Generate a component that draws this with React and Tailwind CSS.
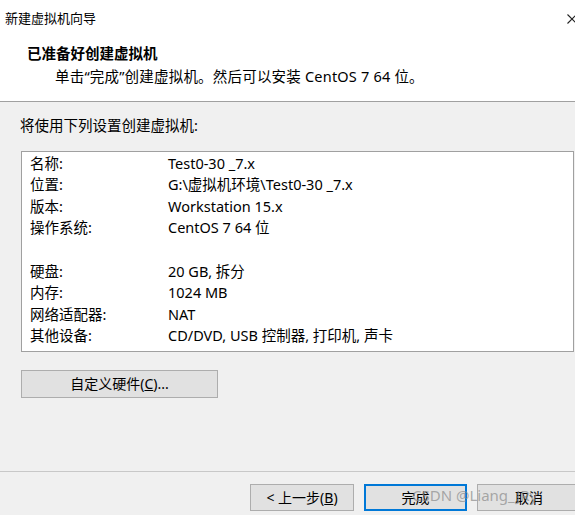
import React from "react";

const rows = [
  ["名称:", "Test0-30 _7.x"],
  ["位置:", "G:\\虚拟机环境\\Test0-30 _7.x"],
  ["版本:", "Workstation 15.x"],
  ["操作系统:", "CentOS 7 64 位"],
  ["", ""],
  ["硬盘:", "20 GB, 拆分"],
  ["内存:", "1024 MB"],
  ["网络适配器:", "NAT"],
  ["其他设备:", "CD/DVD, USB 控制器, 打印机, 声卡"],
];

const font = { fontFamily: '"Noto Sans", "Noto Sans CJK SC", sans-serif' };

function WinButton({ children, primary, className = "" }) {
  return (
    <div
      className={`flex h-[27px] shrink-0 items-center justify-center bg-[#e1e1e1] text-[14px] leading-none text-black ${
        primary ? "border-2 border-[#0078d7]" : "border border-[#adadad]"
      } ${className}`}
    >
      {children}
    </div>
  );
}

export default function App() {
  return (
    <div className="relative h-[515px] w-[575px] overflow-hidden bg-[#f0f0f0] text-black" style={font}>
      {/* HEADER */}
      <div className="h-[102px] border-b border-[#a0a0a0] bg-white">
        <div className="flex items-center justify-between pl-[5px] pt-[9px]">
          <span className="text-[13px] leading-[18px]">新建虚拟机向导</span>
          <svg width="10" height="10" viewBox="0 0 10 10" className="-mr-[2px] mt-[1px]">
            <path d="M0.5 0.5 L9.5 9.5 M9.5 0.5 L0.5 9.5" stroke="#222" strokeWidth="1.1" />
          </svg>
        </div>
        <div className="pl-[27px] pt-[16px] text-[14.5px] font-bold leading-[20px]">已准备好创建虚拟机</div>
        <div className="pl-[55px] pt-[3px] text-[14.5px] leading-[20px] tracking-[0.2px]">
          单击“完成”创建虚拟机。然后可以安装 CentOS 7 64 位。
        </div>
      </div>

      {/* BODY */}
      <div className="pl-[20px] pt-[13px] text-[14.5px] leading-[20px]">将使用下列设置创建虚拟机:</div>

      <div className="ml-[21px] mt-[16px] h-[201px] w-[553px] border border-[#a0a0a0] bg-white pl-[8px]">
        {rows.map(([label, value], i) => (
          <div key={i} className="flex h-[21.6px] items-center text-[14.5px] leading-none">
            <span className="w-[138px] shrink-0">{label}</span>
            <span className="whitespace-nowrap">{value}</span>
          </div>
        ))}
      </div>

      <WinButton className="ml-[21px] mt-[18px] h-[28px] w-[197px]">
        <span>
          自定义硬件(<span className="underline">C</span>)...
        </span>
      </WinButton>

      {/* FOOTER */}
      <div className="mt-[73px] border-t border-[#c8c8c8]">
        <div className="flex gap-[10px] pl-[250px] pt-[12px]">
          <WinButton className="w-[104px]">
            <span>
              &lt; 上一步(<span className="underline">B</span>)
            </span>
          </WinButton>
          <WinButton primary className="w-[103px]">
            <span>完成</span>
          </WinButton>
          <WinButton className="w-[104px]">
            <span>取消</span>
          </WinButton>
        </div>
      </div>

      {/* watermark */}
      <div className="pointer-events-none absolute left-[412px] top-[485px] whitespace-nowrap text-[15px] leading-[20px] text-[#8a8a8a]/70">
        CSDN @Liang_JRy
      </div>
    </div>
  );
}
